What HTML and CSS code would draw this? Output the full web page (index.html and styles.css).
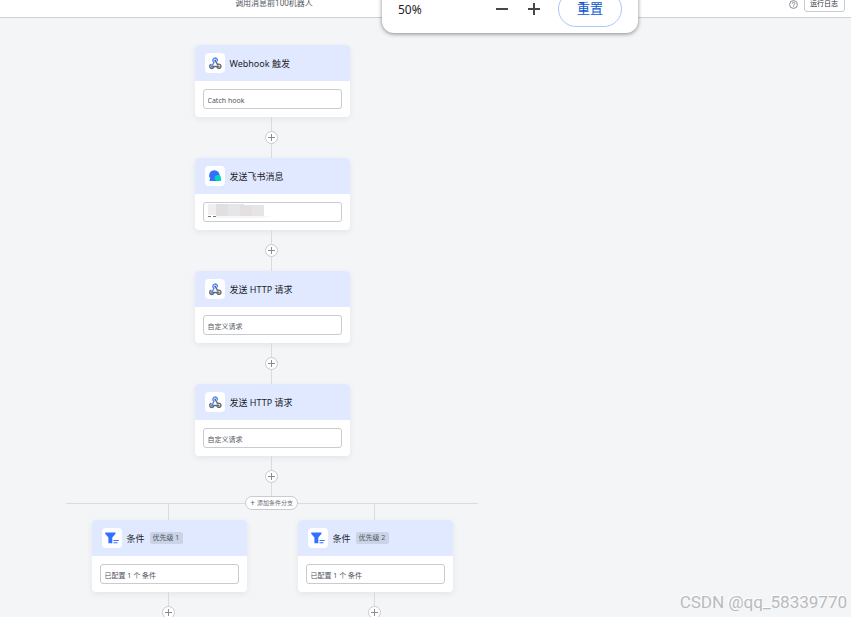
FILE: index.html
```html
<!DOCTYPE html>
<html lang="zh-CN">
<head>
<meta charset="utf-8">
<meta name="viewport" content="width=device-width, initial-scale=1">
<title>调用消息前100机器人</title>
<link rel="stylesheet" href="styles.css">
</head>
<body>
<svg class="defs" aria-hidden="true">
  <symbol id="webhook" viewBox="0 0 20 20">
    <g fill="none" stroke-width="1.400" stroke-linecap="round">
      <path stroke="#646a73" d="M7 13.500h5.500M10.600 8.200l1.800 2.900M6 11.400a2.100 2.100 0 1 0 2.800 2.600M12.400 11.800a2.100 2.100 0 1 1-.2 2.700"/>
      <path stroke="#4c88ff" d="M9 9.200l-2 4M8.200 8.600a2.300 2.300 0 1 1 4.200-.8"/>
    </g>
    <circle cx="10.200" cy="7.600" r="1" fill="#646a73"/>
    <circle cx="6.800" cy="13.500" r="1.100" fill="#4c88ff"/>
    <circle cx="13.700" cy="13.500" r=".9" fill="#646a73"/>
  </symbol>
  <symbol id="chat" viewBox="0 0 20 20">
    <path fill="#3370ff" d="M9.400 4.200a5.300 5.300 0 0 1 5.300 5.300v3.500l-3.200 2H5q-.7 0-.5-.8l.6-1.600a5.300 5.300 0 0 1 4.300-8.400z"/>
    <circle cx="12.800" cy="12" r="3.100" fill="#00d6b9"/>
    <path fill="#00d6b9" d="M13 12h2.700l.4 3.100H13z"/>
  </symbol>
  <symbol id="filter" viewBox="0 0 20 20">
    <path fill="#3370ff" d="M3.200 4.600h10.300v1.200l-3.200 3.700v5.700H6.400V9.500L3.200 5.800z"/>
    <path fill="#3370ff" d="M11.500 12h5.300v1h-5.300zM11.500 14.300h4v1h-4z"/>
  </symbol>
</svg>

<header class="topbar">
  <h1 class="topbar-title">调用消息前100机器人</h1>
  <div class="topbar-tools">
    <svg class="help" viewBox="0 0 9 9" role="img" aria-label="帮助"><circle cx="4.500" cy="4.500" r="3.900"/><path d="M3.200 3.700a1.300 1.300 0 1 1 1.900 1.100q-.6.300-.6.900M4.500 6.400v.8"/></svg>
    <button class="log-button" type="button">运行日志</button>
  </div>
</header>

<div class="zoom-popup">
  <span class="zoom-value">50%</span>
  <button class="zoom-step" type="button" aria-label="缩小"><svg viewBox="0 0 12 12"><path d="M0 6h12"/></svg></button>
  <button class="zoom-step" type="button" aria-label="放大"><svg viewBox="0 0 12 12"><path d="M0 6h12M6 0v12"/></svg></button>
  <button class="zoom-reset" type="button">重置</button>
</div>

<main class="canvas">
  <div class="flow">
    <section class="card">
      <div class="card-head"><svg class="card-icon"><use href="#webhook"/></svg><label for="s1">Webhook 触发</label></div>
      <div class="card-body"><input id="s1" class="field" value="Catch hook" readonly></div>
    </section>
    <div class="link"><button class="add" type="button" aria-label="添加步骤"></button></div>

    <section class="card">
      <div class="card-head"><svg class="card-icon"><use href="#chat"/></svg><label for="s2">发送飞书消息</label></div>
      <div class="card-body">
        <input id="s2" class="field" readonly>
        <svg class="redacted" viewBox="0 0 66 16" aria-hidden="true">
          <path fill="#f0eeef" d="M0 2h8v11H0z"/><path fill="#e1dfe1" d="M8 2h12v12H8z"/><path fill="#e6e6e9" d="M20 2h12v12H20z"/><path fill="#e4e0e1" d="M32 2h4v1h8v11H32z"/><path fill="#e5e5e8" d="M44 3h12v11H44z"/><path fill="#f7f7f8" d="M8 14h58l-12 2-40 1H8z"/><path fill="#77727a" d="M0 14h3v1H0zM5 14h3v1H5z"/>
        </svg>
      </div>
    </section>
    <div class="link"><button class="add" type="button" aria-label="添加步骤"></button></div>

    <section class="card">
      <div class="card-head"><svg class="card-icon"><use href="#webhook"/></svg><label for="s3">发送 HTTP 请求</label></div>
      <div class="card-body"><input id="s3" class="field" value="自定义请求" readonly></div>
    </section>
    <div class="link"><button class="add" type="button" aria-label="添加步骤"></button></div>

    <section class="card">
      <div class="card-head"><svg class="card-icon"><use href="#webhook"/></svg><label for="s4">发送 HTTP 请求</label></div>
      <div class="card-body"><input id="s4" class="field" value="自定义请求" readonly></div>
    </section>
    <div class="link"><button class="add" type="button" aria-label="添加步骤"></button></div>

    <div class="split"><button class="add-branch" type="button"><span class="plus">+</span>添加条件分支</button></div>

    <div class="branches">
      <div class="branch">
        <section class="card">
          <div class="card-head"><svg class="card-icon"><use href="#filter"/></svg><label for="c1">条件</label><span class="tag">优先级 1</span></div>
          <div class="card-body"><input id="c1" class="field" value="已配置 1 个 条件" readonly></div>
        </section>
        <div class="link"><button class="add" type="button" aria-label="添加步骤"></button></div>
      </div>
      <div class="branch">
        <section class="card">
          <div class="card-head"><svg class="card-icon"><use href="#filter"/></svg><label for="c2">条件</label><span class="tag">优先级 2</span></div>
          <div class="card-body"><input id="c2" class="field" value="已配置 1 个 条件" readonly></div>
        </section>
        <div class="link"><button class="add" type="button" aria-label="添加步骤"></button></div>
      </div>
    </div>
  </div>
</main>
<div class="watermark">CSDN @qq_58339770</div>
</body>
</html>
```
FILE: styles.css
```css
* {
  box-sizing: border-box;
}

body {
  margin: 0;
  height: 100vh;
  overflow: hidden;
  display: flex;
  flex-direction: column;
  position: relative;
  background: #f4f5f7;
  color: #1f2329;
  font-family: "Noto Sans", "Noto Sans CJK SC", sans-serif;
}

button,
input {
  font-family: inherit;
  margin: 0;
}

.defs {
  position: absolute;
  width: 0;
  height: 0;
}

.topbar {
  flex: none;
  display: flex;
  align-items: flex-end;
  height: 18px;
  padding: 0 6px 5px 66px;
  background: #fff;
  border-bottom: 1px solid #cfd1d5;
}

.topbar-title {
  width: 416px;
  margin: 0;
  padding-bottom: 3px;
  text-align: center;
  font-size: 8px;
  line-height: 12px;
  font-weight: 400;
  color: #51565d;
}

.topbar-tools {
  display: flex;
  align-items: center;
  gap: 6px;
  margin-left: auto;
}

.help {
  width: 9px;
  height: 9px;
  fill: none;
  stroke: #6b7078;
  stroke-width: 0.8;
}

.log-button {
  height: 16px;
  padding: 0 6px 0 5px;
  border: 1px solid #c9cbd0;
  border-radius: 3px;
  background: #fff;
  color: #2b2f36;
  font-size: 7px;
  line-height: 14px;
}

.zoom-popup {
  position: absolute;
  top: -16px;
  right: 213px;
  display: flex;
  align-items: center;
  width: 256px;
  height: 49px;
  padding: 0 16px;
  border-radius: 12px;
  background: #fff;
  box-shadow: 0 1px 4px rgba(0, 0, 0, 0.45);
}

.zoom-value {
  flex: 1;
  padding-top: 2px;
  font-size: 12px;
  line-height: 16px;
}

.zoom-step {
  display: flex;
  width: 12px;
  height: 12px;
  margin-right: 20px;
  padding: 0;
  border: 0;
  background: none;
}

.zoom-step svg {
  width: 12px;
  height: 12px;
  stroke: #474747;
  stroke-width: 2;
}

.zoom-reset {
  width: 64px;
  height: 36px;
  margin-left: -2px;
  padding: 0 0 2px;
  border: 1px solid #a8c7fa;
  border-radius: 18px;
  background: #fff;
  color: #0b57d0;
  font-size: 13px;
}

.canvas {
  flex: 1;
  min-height: 0;
  overflow: hidden;
  padding: 27px 0 0 66px;
}

.flow {
  display: flex;
  flex-direction: column;
  align-items: center;
  width: 412px;
}

.card {
  flex: none;
  width: 155px;
  border-radius: 4px;
  background: #fff;
  box-shadow: 0 2px 6px rgba(31, 35, 41, 0.07);
}

.card-head {
  display: flex;
  align-items: center;
  gap: 5px;
  height: 36px;
  padding: 0 10px;
  border-radius: 4px 4px 0 0;
  background: #e0e9ff;
  font-size: 9px;
  line-height: 14px;
}

.card-head label {
  padding-top: 2px;
}

.card-icon {
  width: 20px;
  height: 20px;
  border-radius: 4px;
  background: #fff;
}

.tag {
  padding: 0 4px 0 3px;
  border-radius: 2px;
  background: #cbd3e6;
  color: #51565f;
  font-size: 7px;
  line-height: 12px;
}

.card-body {
  position: relative;
  padding: 8px;
}

.field {
  display: block;
  width: 100%;
  height: 20px;
  padding: 2px 4px 0;
  border: 1px solid #c9cbcf;
  border-radius: 3px;
  background: #fff;
  color: #51565d;
  font-size: 7px;
}

.redacted {
  position: absolute;
  top: 8px;
  left: 13px;
  width: 66px;
  height: 16px;
}

.link {
  flex: none;
  display: flex;
  align-items: center;
  justify-content: center;
  width: 13px;
  height: 41px;
  margin-right: 1px;
  background: linear-gradient(#d9dbdf, #d9dbdf) center / 1px 100% no-repeat;
}

.add {
  flex: none;
  width: 13px;
  height: 13px;
  padding: 0;
  border: 1px solid #c9cbcf;
  border-radius: 50%;
  background:
    linear-gradient(#8a8e94, #8a8e94) center / 7px 1px no-repeat,
    linear-gradient(#8a8e94, #8a8e94) center / 1px 7px no-repeat,
    #fff;
}

.split {
  display: flex;
  justify-content: center;
  width: 100%;
  margin-top: -1px;
  background: linear-gradient(#d9dbdf, #d9dbdf) center / 100% 1px no-repeat;
}

.add-branch {
  display: flex;
  align-items: center;
  gap: 2px;
  height: 14px;
  margin-right: 1px;
  padding: 0 4px;
  border: 1px solid #c9cbcf;
  border-radius: 7px;
  background: #fff;
  color: #646a73;
  font-size: 6px;
  line-height: 12px;
}

.plus {
  font-size: 9px;
}

.branches {
  display: grid;
  grid-template-columns: 1fr 1fr;
  width: 100%;
}

.branch {
  display: flex;
  flex-direction: column;
  align-items: center;
  margin-top: -6px;
  padding-top: 16px;
  background: linear-gradient(#d9dbdf, #d9dbdf) calc(50% - 1px) 0 / 1px 16px no-repeat;
}

.watermark {
  position: absolute;
  right: 4px;
  bottom: 5px;
  color: #b9bbbd;
  font-family: Roboto, sans-serif;
  font-size: 17px;
  line-height: 20px;
  text-shadow: -1px -1px 0 #fff;
}
```
